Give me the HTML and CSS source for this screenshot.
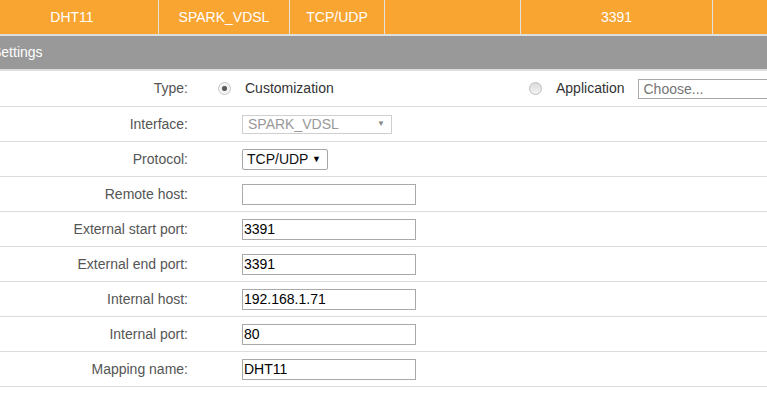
FILE: index.html
```html
<!DOCTYPE html>
<html lang="en">
	<head>
		<meta charset="UTF-8" />
		<title>Port mapping</title>
		<link rel="stylesheet" href="styles.css">
	</head>
	<body>
		<div class="page">
			<div class="map-head">
				<div class="cell c-name">DHT11</div>
				<div class="cell c-iface">SPARK_VDSL</div>
				<div class="cell c-proto">TCP/UDP</div>
				<div class="cell c-remote"></div>
				<div class="cell c-port">3391</div>
				<div class="cell c-rest"></div>
			</div>
			<div class="section-title"><span>Settings</span></div>
			<form class="settings" action="">
				<div class="row row-type">
					<label class="label">Type:</label>
					<div class="value type-value">
						<div class="option opt-custom">
							<input type="radio" name="type" id="custom" checked />
							<label for="custom">Customization</label>
						</div>
						<div class="option opt-app">
							<input type="radio" name="type" id="app" />
							<label for="app">Application</label>
							<span class="combo">Choose...</span>
						</div>
					</div>
				</div>
				<div class="row">
					<label class="label">Interface:</label>
					<div class="value">
						<div class="fake-select disabled">
							<span>SPARK_VDSL</span><span class="arrow">&#9660;</span>
						</div>
					</div>
				</div>
				<div class="row">
					<label class="label">Protocol:</label>
					<div class="value">
						<div class="fake-select proto">
							<span>TCP/UDP</span><span class="arrow">&#9660;</span>
						</div>
					</div>
				</div>
				<div class="row">
					<label class="label" for="remote">Remote host:</label>
					<div class="value"><input type="text" id="remote" value="" /></div>
				</div>
				<div class="row">
					<label class="label" for="ext_start">External start port:</label>
					<div class="value"><input type="text" id="ext_start" value="3391" /></div>
				</div>
				<div class="row">
					<label class="label" for="ext_end">External end port:</label>
					<div class="value"><input type="text" id="ext_end" value="3391" /></div>
				</div>
				<div class="row">
					<label class="label" for="int_host">Internal host:</label>
					<div class="value"><input type="text" id="int_host" value="192.168.1.71" /></div>
				</div>
				<div class="row">
					<label class="label" for="int_port">Internal port:</label>
					<div class="value"><input type="text" id="int_port" value="80" /></div>
				</div>
				<div class="row">
					<label class="label" for="map_name">Mapping name:</label>
					<div class="value"><input type="text" id="map_name" value="DHT11" /></div>
				</div>
			</form>
		</div>
	</body>
</html>
```
FILE: styles.css
```css
body{
	margin: 0;
	font: 14px/1.2 "Liberation Sans", Arial, sans-serif;
	color: #555;
	background: #fff;
	overflow: hidden;
}
div.page{
	width: 767px;
	overflow: hidden;
}

/* orange summary row */
div.map-head{
	display: flex;
	height: 34px;
	margin-left: -14px;
	background: #f8a532;
	border-bottom: 2px solid #dedede;
	color: #fff;
}
div.map-head div.cell{
	flex: none;
	box-sizing: border-box;
	border-right: 1px solid #e3e3e3;
	text-align: center;
	line-height: 34px;
}
div.map-head div.c-name{ width: 173px; }
div.map-head div.c-iface{ width: 131px; }
div.map-head div.c-proto{ width: 95px; }
div.map-head div.c-remote{ width: 136px; }
div.map-head div.c-port{ width: 192px; }
div.map-head div.c-rest{ flex: 1; border-right: none; }

/* grey section bar */
div.section-title{
	height: 33px;
	line-height: 33px;
	background: #999;
	color: #fff;
	border-bottom: 2px solid #dedede;
}
div.section-title span{
	margin-left: -8px;
}

/* form rows */
form.settings div.row{
	display: flex;
	align-items: center;
	height: 34px;
	border-bottom: 1px solid #dcdcdc;
}
form.settings div.row-type{
	height: 35px;
}
form.settings label.label{
	width: 188px;
	flex: none;
	text-align: right;
	color: #555;
}
form.settings div.value{
	margin-left: 54px;
	display: flex;
	align-items: center;
}
form.settings div.type-value{
	margin-left: 30px;
	flex: 1;
	min-width: 0;
	white-space: nowrap;
}
div.option{
	display: flex;
	align-items: center;
	color: #333;
}
div.opt-custom{
	width: 311px;
	flex: none;
}

/* radios */
input[type="radio"]{
	-webkit-appearance: none;
	appearance: none;
	box-sizing: border-box;
	width: 13px;
	height: 13px;
	margin: 0 14px 0 0;
	border: 1px solid #bdbdbd;
	border-radius: 50%;
	background: linear-gradient(#dcdcdc, #f4f4f4);
}
input[type="radio"]:checked{
	border-color: #c8c8c8;
	background: radial-gradient(#555 0, #666 30%, #f2f2f2 38%, #fafafa 100%);
}
div.opt-app input[type="radio"]{
	margin-right: 14px;
}
div.opt-app label{
	margin-right: 13px;
}

span.combo{
	box-sizing: border-box;
	width: 160px;
	height: 20px;
	line-height: 18px;
	padding-left: 5px;
	border: 1px solid #a9a9a9;
	color: #757575;
	flex: none;
}

/* selects */
div.fake-select{
	box-sizing: border-box;
	display: flex;
	align-items: center;
	justify-content: space-between;
	height: 19px;
	border: 1px solid #a6a6a6;
	color: #111;
}
div.fake-select.disabled{
	width: 150px;
	padding: 0 6px 0 5px;
	border-color: #cfcfcf;
	color: #999;
}
div.fake-select.disabled span.arrow{
	font-size: 8px;
	color: #888;
}
div.fake-select.proto{
	width: 86px;
	height: 21px;
	padding: 0 6px 0 4px;
	border-radius: 2px;
}
div.fake-select.proto span.arrow{
	font-size: 9px;
	color: #000;
}

/* text inputs */
form.settings input[type="text"]{
	box-sizing: border-box;
	width: 174px;
	height: 21px;
	margin: 0;
	padding: 0 1px;
	border: 1px solid #a9a9a9;
	font: 14px "Liberation Sans", Arial, sans-serif;
	color: #000;
	outline: none;
}
```
